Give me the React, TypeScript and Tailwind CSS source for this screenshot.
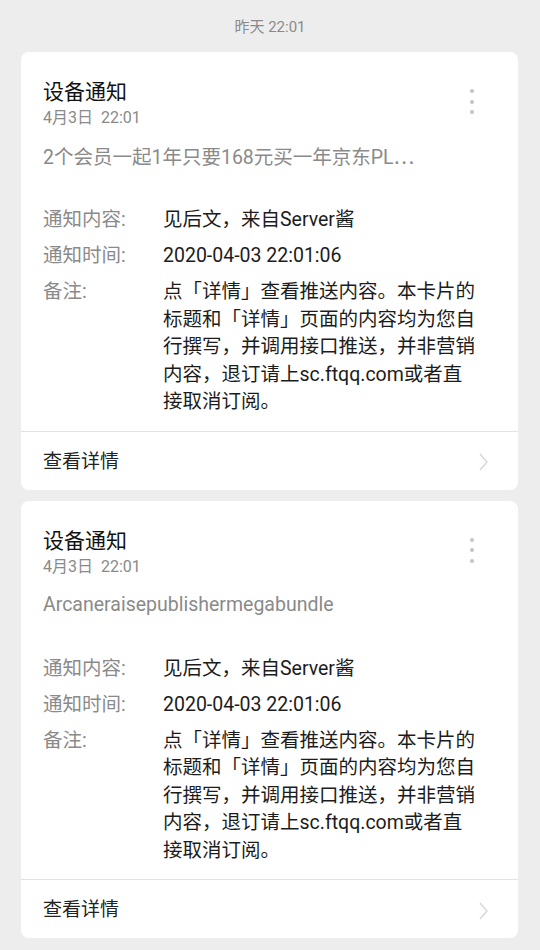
const FONT = "font-['Roboto','Noto_Sans_CJK_SC',sans-serif]";

type Notice = {
  title: string;
  date: string;
  summary: string;
  more?: boolean;
};

const notices: Notice[] = [
  { title: '设备通知', date: '4月3日  22:01', summary: '2个会员一起1年只要168元买一年京东PL', more: true },
  { title: '设备通知', date: '4月3日  22:01', summary: 'Arcaneraisepublishermegabundle' },
];

function Row({ label, children }: { label: string; children: React.ReactNode }) {
  return (
    <div className="flex text-[19.5px] leading-[27.5px]">
      <div className="w-[120px] shrink-0 text-[#8a8a8a]">{label}</div>
      <div className="flex-1 text-[#1c1c1c] pr-[21px]">{children}</div>
    </div>
  );
}

function Card({ n }: { n: Notice }) {
  return (
    <div className="mx-[21px] w-[497px] bg-white rounded-[8px] overflow-hidden">
      <div className="relative pl-[22px] pr-[22px] pt-[26px] pb-[15px]">
        {/* more dots */}
        <div className="absolute right-[44px] top-[37px] flex flex-col gap-[6.5px]">
          <span className="w-[4px] h-[4px] rounded-full bg-[#c4c4c4]" />
          <span className="w-[4px] h-[4px] rounded-full bg-[#c4c4c4]" />
          <span className="w-[4px] h-[4px] rounded-full bg-[#c4c4c4]" />
        </div>
        <div className="text-[21px] leading-[28px] text-[#111]">{n.title}</div>
        <div className="text-[16px] leading-[24px] text-[#8a8a8a] whitespace-pre">{n.date}</div>
        <div className="mt-[12px] h-[28px] text-[19.5px] leading-[28px] text-[#8a8a8a] whitespace-nowrap overflow-hidden">
          {n.summary}
          {n.more && <span className="font-['Noto_Sans_CJK_SC',sans-serif]">⋯</span>}
        </div>
        <div className="mt-[36px] flex flex-col gap-[8.5px]">
          <Row label="通知内容:">见后文，来自Server酱</Row>
          <Row label="通知时间:">2020-04-03 22:01:06</Row>
          <Row label="备注:">
            点「详情」查看推送内容。本卡片的标题和「详情」页面的内容均为您自行撰写，并调用接口推送，并非营销内容，退订请上sc.ftqq.com或者直接取消订阅。
          </Row>
        </div>
      </div>
      <div className="border-t border-[#e3e3e3] h-[59px] pl-[22px] pr-[30px] pt-[3px] flex items-center justify-between">
        <span className="text-[19px] text-[#222]">查看详情</span>
        <svg width="9" height="18" viewBox="0 0 9 18" fill="none">
          <path d="M1 1l7 8-7 8" stroke="#d4d4d4" strokeWidth="1.3" />
        </svg>
      </div>
    </div>
  );
}

export default function App() {
  return (
    <div className={`${FONT} w-[540px] h-[950px] bg-[#ededed] overflow-hidden`}>
      <div className="pt-[17px] pb-[15px] text-center text-[15px] leading-[20px] text-[#8a8a8a]">
        昨天 22:01
      </div>
      <div className="flex flex-col gap-[11px]">
        {notices.map((n, i) => (
          <Card key={i} n={n} />
        ))}
      </div>
    </div>
  );
}
